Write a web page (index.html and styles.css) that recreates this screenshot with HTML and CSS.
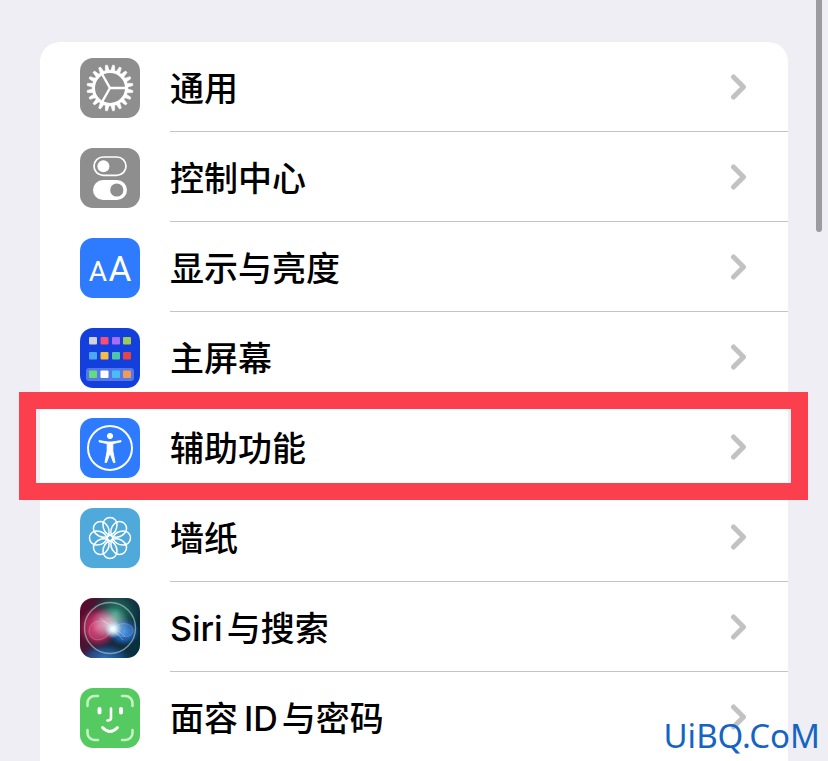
FILE: index.html
```html
<!DOCTYPE html>
<html lang="zh-CN">
<head>
<meta charset="utf-8">
<meta name="viewport" content="width=device-width, initial-scale=1">
<title>设置</title>
<link rel="stylesheet" href="styles.css">
</head>
<body>
<svg class="defs" aria-hidden="true">
  <defs>
    <symbol id="chevron" viewBox="0 0 18 28"><path d="M3.500 4 13.500 14 3.500 24" fill="none" stroke="#c2c2c4" stroke-width="5" stroke-linecap="round" stroke-linejoin="round"/></symbol>
  </defs>
</svg>
<main class="page">
  <nav class="list" aria-label="设置">
    <a class="row" href="#general">
      <svg class="icon" viewBox="0 0 60 60" aria-hidden="true">
        <defs>
          <path id="tooth" d="M28 13 29 7h2l1 6z"/>
          <g id="teeth">
            <use href="#tooth" transform="rotate(9 30 30)"/>
            <use href="#tooth" transform="rotate(27 30 30)"/>
            <use href="#tooth" transform="rotate(45 30 30)"/>
            <use href="#tooth" transform="rotate(63 30 30)"/>
            <use href="#tooth" transform="rotate(81 30 30)"/>
          </g>
        </defs>
        <rect width="60" height="60" fill="#8e8e8f"/>
        <g fill="#fff" stroke="#fff" stroke-width=".6" stroke-linejoin="round">
          <use href="#teeth"/>
          <use href="#teeth" transform="rotate(90 30 30)"/>
          <use href="#teeth" transform="rotate(180 30 30)"/>
          <use href="#teeth" transform="rotate(270 30 30)"/>
        </g>
        <circle cx="30" cy="30" r="16.5" fill="none" stroke="#fff" stroke-width="3"/>
        <path d="M46 30H30L22 16M30 30 22 44" fill="none" stroke="#fff" stroke-width="2.4"/>
      </svg>
      <span class="label">通用</span>
      <svg class="chevron" aria-hidden="true"><use href="#chevron"/></svg>
    </a>
    <a class="row" href="#control-center">
      <svg class="icon" viewBox="0 0 60 60" aria-hidden="true">
        <rect width="60" height="60" fill="#8e8e8f"/>
        <rect x="14" y="9" width="32" height="18.4" rx="9.2" fill="none" stroke="#fff" stroke-width="1.700"/>
        <circle cx="23.4" cy="18.2" r="6" fill="#fff"/>
        <rect x="13" y="32" width="34" height="20" rx="10" fill="#fff"/>
        <circle cx="36.8" cy="42" r="6.6" fill="#8e8e8f"/>
      </svg>
      <span class="label">控制中心</span>
      <svg class="chevron" aria-hidden="true"><use href="#chevron"/></svg>
    </a>
    <a class="row" href="#display">
      <svg class="icon" viewBox="0 0 60 60" aria-hidden="true">
        <rect width="60" height="60" fill="#2f7bff"/>
        <g class="glyphs" fill="#fff" text-anchor="middle">
          <text x="18" y="43" font-size="28">A</text>
          <text x="40" y="43" font-size="35">A</text>
        </g>
      </svg>
      <span class="label">显示与亮度</span>
      <svg class="chevron" aria-hidden="true"><use href="#chevron"/></svg>
    </a>
    <a class="row" href="#home-screen">
      <svg class="icon" viewBox="0 0 60 60" aria-hidden="true">
        <rect width="60" height="60" fill="#133fdc"/>
        <rect x="6" y="40" width="48" height="13" rx="3" fill="#5578e8"/>
        <g>
          <rect x="9" y="9" width="8" height="7.5" rx="1" fill="#d0d1e2"/>
          <rect x="20.5" y="9" width="8" height="7.5" rx="1" fill="#fa4d78"/>
          <rect x="32" y="9" width="8" height="7.5" rx="1" fill="#a86cf9"/>
          <rect x="43" y="9" width="8" height="7.5" rx="1" fill="#9fcb52"/>
          <rect x="9" y="24" width="8" height="7.5" rx="1" fill="#4ba7fa"/>
          <rect x="20.5" y="24" width="8" height="7.5" rx="1" fill="#f5bd41"/>
          <rect x="32" y="24" width="8" height="7.5" rx="1" fill="#50c4aa"/>
          <rect x="43" y="24" width="8" height="7.5" rx="1" fill="#e84444"/>
          <rect x="9" y="42.5" width="8" height="7.5" rx="1" fill="#64dc7b"/>
          <rect x="20.5" y="42.5" width="8" height="7.5" rx="1" fill="#fff"/>
          <rect x="32" y="42.5" width="8" height="7.5" rx="1" fill="#48bef8"/>
          <rect x="43" y="42.5" width="8" height="7.5" rx="1" fill="#f29a58"/>
        </g>
      </svg>
      <span class="label">主屏幕</span>
      <svg class="chevron" aria-hidden="true"><use href="#chevron"/></svg>
    </a>
    <a class="row marked" href="#accessibility">
      <svg class="icon" viewBox="0 0 60 60" aria-hidden="true">
        <rect width="60" height="60" fill="#2f7bff"/>
        <circle cx="30" cy="30" r="22" fill="none" stroke="#fff" stroke-width="2"/>
        <g fill="#fff" stroke="#fff" stroke-linejoin="round">
          <circle cx="30" cy="18" r="2.6"/>
          <path d="M19 22.6 28 24h4l9-1.4v1.2L32.800 25.600v7.400L35 44.500h-1.500L30 35l-3.500 9.500H25L27.200 33v-7.400L19 23.800z"/>
        </g>
      </svg>
      <span class="label">辅助功能</span>
      <svg class="chevron" aria-hidden="true"><use href="#chevron"/></svg>
    </a>
    <a class="row" href="#wallpaper">
      <svg class="icon" viewBox="0 0 60 60" aria-hidden="true">
        <defs><path id="petal" d="M30 27.500C25.500 25.500 23 21 23 16.500a7 7 0 0 1 14 0C37 21 34.500 25.500 30 27.500z"/></defs>
        <rect width="60" height="60" fill="#4fa9da"/>
        <g fill="none" stroke="#fff" stroke-width="1.500">
          <use href="#petal"/>
          <use href="#petal" transform="rotate(45 30 30)"/>
          <use href="#petal" transform="rotate(90 30 30)"/>
          <use href="#petal" transform="rotate(135 30 30)"/>
          <use href="#petal" transform="rotate(180 30 30)"/>
          <use href="#petal" transform="rotate(225 30 30)"/>
          <use href="#petal" transform="rotate(270 30 30)"/>
          <use href="#petal" transform="rotate(315 30 30)"/>
          <circle cx="30" cy="30" r="2.800"/>
        </g>
      </svg>
      <span class="label">墙纸</span>
      <svg class="chevron" aria-hidden="true"><use href="#chevron"/></svg>
    </a>
    <a class="row" href="#siri">
      <svg class="icon" viewBox="0 0 60 60" aria-hidden="true">
        <defs>
          <linearGradient id="siri-base" x1="0" y1=".4" x2="1" y2=".6">
            <stop offset="0" stop-color="#5c0a2c"/><stop offset=".5" stop-color="#1d2a40"/><stop offset="1" stop-color="#07303f"/>
          </linearGradient>
          <radialGradient id="siri-green"><stop offset="0" stop-color="#2c9070"/><stop offset="1" stop-color="#12644e" stop-opacity="0"/></radialGradient>
          <radialGradient id="siri-pink"><stop offset="0" stop-color="#e0447a"/><stop offset=".6" stop-color="#c12a60" stop-opacity=".8"/><stop offset="1" stop-color="#a01848" stop-opacity="0"/></radialGradient>
          <radialGradient id="siri-blue"><stop offset="0" stop-color="#3d90ea"/><stop offset=".6" stop-color="#1f68bd" stop-opacity=".8"/><stop offset="1" stop-color="#174a99" stop-opacity="0"/></radialGradient>
          <radialGradient id="siri-glow"><stop offset="0" stop-color="#fff"/><stop offset=".3" stop-color="#e9fbff" stop-opacity=".9"/><stop offset="1" stop-color="#bcdcec" stop-opacity="0"/></radialGradient>
        </defs>
        <rect width="60" height="60" fill="url(#siri-base)"/>
        <ellipse cx="25" cy="60" rx="26" ry="14" fill="url(#siri-blue)" opacity=".7"/>
        <circle cx="36" cy="15" r="24" fill="url(#siri-green)"/>
        <ellipse cx="18" cy="29" rx="20" ry="21" fill="url(#siri-pink)"/>
        <ellipse cx="44" cy="34" rx="16" ry="14" fill="url(#siri-blue)"/>
        <path d="M31 31C26 18 9 22 9 33s15 13 23-1c5-9 20-8 21 0s-14 10-22-1z" fill="#fff" fill-opacity=".08" stroke="#f2a3c8" stroke-opacity=".35"/>
        <circle cx="30" cy="30" r="25.500" fill="none" stroke="#9ab8b8" stroke-opacity=".75" stroke-width="1.400"/>
        <ellipse cx="30" cy="25" rx="19" ry="16" fill="url(#siri-glow)" opacity=".6"/>
        <circle cx="33" cy="31" r="9" fill="url(#siri-glow)"/>
        <path d="m33 31 10 11M20 20l25 18" stroke="#fff" stroke-opacity=".3"/>
      </svg>
      <span class="label">Siri<span class="after-latin">与搜索</span></span>
      <svg class="chevron" aria-hidden="true"><use href="#chevron"/></svg>
    </a>
    <a class="row" href="#face-id">
      <svg class="icon" viewBox="0 0 60 60" aria-hidden="true">
        <rect width="60" height="60" fill="#55ca60"/>
        <g fill="none" stroke="#fff" stroke-linecap="round">
          <path d="M7.500 18v-3a7 7 0 0 1 7-7H18M42 8h3.500a7 7 0 0 1 7 7v3M52.500 42v3a7 7 0 0 1-7 7H42M18 52h-3.500a7 7 0 0 1-7-7v-3" stroke="#c5f3c6" stroke-width="2.600"/>
          <path d="M19.500 21v3.500M41 21v3.500" stroke-width="4"/>
          <path d="M31 20.500V30q0 2.500-3.500 2.500" stroke-width="2.600"/>
          <path d="M22.500 39.500q7.500 8 15 0" stroke-width="3"/>
        </g>
      </svg>
      <span class="label">面容<span class="latin">ID</span>与密码</span>
      <svg class="chevron" aria-hidden="true"><use href="#chevron"/></svg>
    </a>
  </nav>
</main>
<div class="scroll-thumb"></div>
<div class="watermark">UiBQ.CoM</div>
</body>
</html>
```
FILE: styles.css
```css
* {
  box-sizing: border-box;
}

body {
  position: relative;
  height: 100vh;
  margin: 0;
  overflow: hidden;
  background: #efeef4;
  color: #000;
  font-family: Inter, "Noto Sans CJK SC", sans-serif;
}

.defs {
  position: absolute;
  width: 0;
  height: 0;
}

.page {
  padding: 42px 40px 0;
}

.list {
  border-radius: 20px 20px 0 0;
  background: #fff;
}

.row {
  position: relative;
  display: flex;
  align-items: center;
  gap: 30px;
  height: 90px;
  padding: 2px 40px 0;
  color: inherit;
  text-decoration: none;
}

.row::after {
  content: "";
  position: absolute;
  right: 0;
  bottom: 0;
  left: 130px;
  height: 1px;
  background: #c4c4c6;
}

.icon {
  flex: none;
  width: 60px;
  height: 60px;
  border-radius: 13px;
}

.glyphs {
  font-family: Roboto, sans-serif;
}

.label {
  flex: 1;
  padding-top: 2px;
  font-size: 34px;
  font-weight: 500;
  line-height: 48px;
}

.after-latin {
  margin-left: 4px;
}

.latin {
  margin: 0 4px 0 6px;
}

.chevron {
  flex: none;
  width: 18px;
  height: 28px;
  margin-bottom: 2px;
}

.marked::before {
  content: "";
  position: absolute;
  inset: -10px -20px -8px -21px;
  border: 17px solid #fc3f4c;
  z-index: 1;
}

.scroll-thumb {
  position: absolute;
  top: -6px;
  right: 6px;
  width: 6px;
  height: 238px;
  border-radius: 3px;
  background: #9c9b9f;
}

.watermark {
  position: absolute;
  right: 8px;
  bottom: 5px;
  color: #1464c4;
  font-family: "Noto Sans", sans-serif;
  font-size: 33px;
  line-height: 40px;
}
```
